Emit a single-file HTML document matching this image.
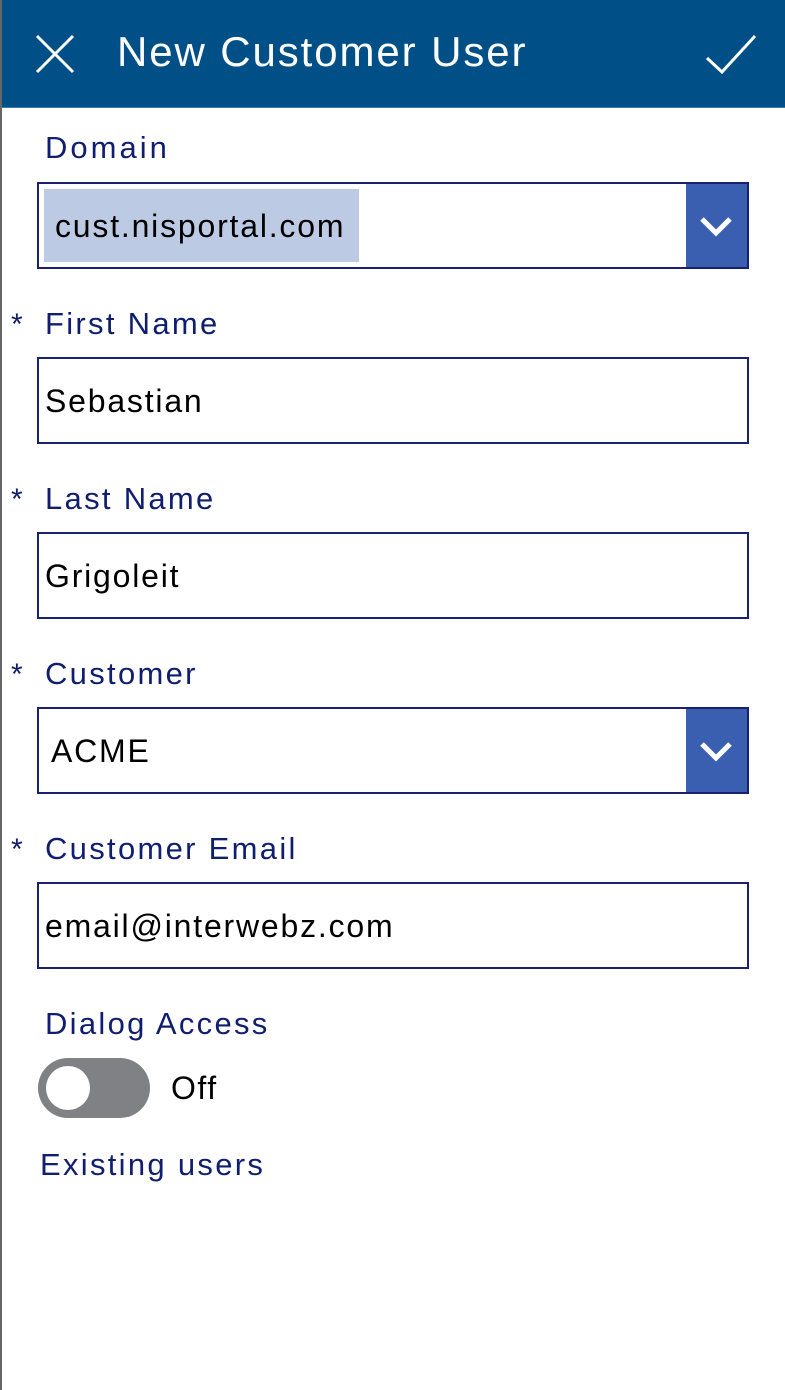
<!DOCTYPE html>
<html><head><style>
body{margin:0;width:785px;height:1390px;background:#fff;position:relative;overflow:hidden;font-family:"Liberation Sans",sans-serif;}
.lb{position:absolute;left:0;top:0;width:2px;height:1390px;background:#666;}
.hdr{position:absolute;left:0;top:0;width:785px;height:107px;background:#005087;border-bottom:1px solid #3a7fb0;}
.title{position:absolute;left:117px;top:28px;color:#fff;font-size:42px;letter-spacing:1.9px;}
.lab{position:absolute;left:45px;color:#0f1e6e;font-size:31px;line-height:36px;letter-spacing:2.3px;}
.star{position:absolute;left:11px;color:#0f1e6e;font-size:30px;}
.box{position:absolute;left:37px;width:708px;height:83px;border:2px solid #1c2070;box-sizing:content-box;}
.box span{position:absolute;left:6px;top:24px;font-size:32px;color:#000;letter-spacing:1.8px;}
.dd{position:absolute;right:0;top:0;width:61px;height:83px;background:#3a5fb0;}
</style></head><body>
<div class="hdr">
<svg style="position:absolute;left:35px;top:34px" width="40" height="40"><path d="M2 2L38 38M38 2L2 38" stroke="#fff" stroke-width="3"/></svg>
<div class="title">New Customer User</div>
<svg style="position:absolute;left:705px;top:34px" width="52" height="40"><path d="M2 24L17 38L50 2" stroke="#fff" stroke-width="3" fill="none"/></svg>
</div>
<div class="lb"></div>

<div class="lab" style="top:130px;letter-spacing:3px">Domain</div>
<div class="box" style="top:182px"><div style="position:absolute;left:5px;top:5px;width:315px;height:73px;background:#bccbe3"></div><span style="left:16px">cust.nisportal.com</span><div class="dd"><svg width="61" height="83"><path d="M16 35L30 49L44 35" stroke="#fff" stroke-width="5" fill="none"/></svg></div></div>

<div class="star" style="top:308px">*</div><div class="lab" style="top:306px">First Name</div>
<div class="box" style="top:357px"><span>Sebastian</span></div>

<div class="star" style="top:483px">*</div><div class="lab" style="top:481px">Last Name</div>
<div class="box" style="top:532px"><span>Grigoleit</span></div>

<div class="star" style="top:658px">*</div><div class="lab" style="top:656px">Customer</div>
<div class="box" style="top:707px"><span style="left:12px">ACME</span><div class="dd"><svg width="61" height="83"><path d="M16 35L30 49L44 35" stroke="#fff" stroke-width="5" fill="none"/></svg></div></div>

<div class="star" style="top:833px">*</div><div class="lab" style="top:831px">Customer Email</div>
<div class="box" style="top:882px"><span>email@interwebz.com</span></div>

<div class="lab" style="top:1006px">Dialog Access</div>
<div style="position:absolute;left:38px;top:1058px;width:112px;height:60px;border-radius:30px;background:#808184"></div>
<div style="position:absolute;left:46px;top:1066px;width:44px;height:44px;border-radius:50%;background:#fff"></div>
<div style="position:absolute;left:171px;top:1070px;font-size:32px;color:#000;letter-spacing:1.5px">Off</div>
<div class="lab" style="top:1147px;left:40px">Existing users</div>
</body></html>
